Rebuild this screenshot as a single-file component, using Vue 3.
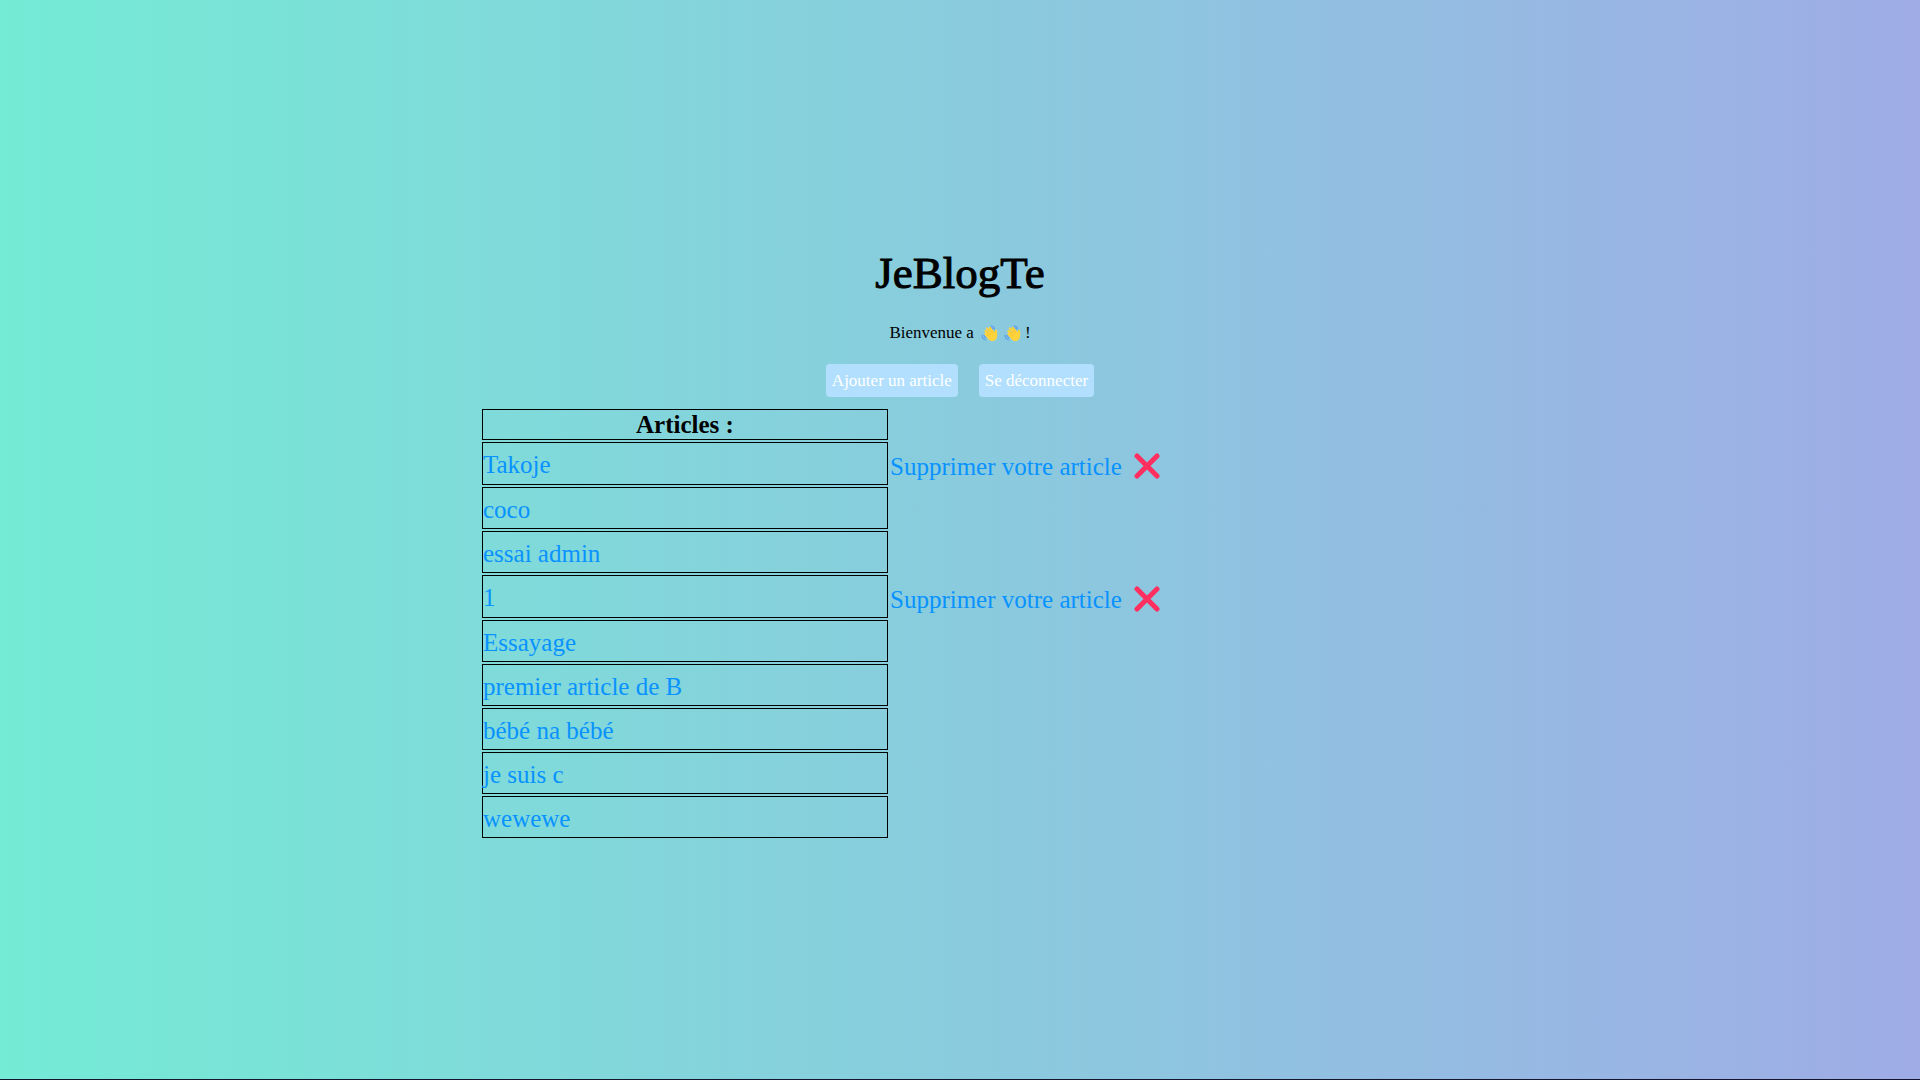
<script setup>
const articles = [
  { title: 'Takoje', own: true },
  { title: 'coco', own: false },
  { title: 'essai admin', own: false },
  { title: '1', own: true },
  { title: 'Essayage', own: false },
  { title: 'premier article de B', own: false },
  { title: 'bébé na bébé', own: false },
  { title: 'je suis c', own: false },
  { title: 'wewewe', own: false }
]
</script>

<template>
  <main class="page">
    <h1>JeBlogTe</h1>
    <p class="welcome">
      <span>Bienvenue a</span>
      <span class="waves">
        <svg v-for="n in 2" :key="n" class="wave" viewBox="0 0 34 34" aria-hidden="true">
          <g fill="none" stroke="#5c9dec" stroke-width="2.4" stroke-linecap="round">
            <path d="M20 2Q26 2 27 8M19 5Q22 5 24 9" />
            <path d="M2 20Q2 27 9 30M6 20Q6 24 10 26" />
          </g>
          <g fill="none" stroke="#ffd33b" stroke-width="4.6" stroke-linecap="round">
            <path d="M9 12L19 22M12 7L23 19M18 6L27 18M9 18L17 26M30 12L30 22" />
          </g>
          <path d="M13 16L20 12L27 14L32 16Q33 26 29 30Q22 35 15 29L11 23Z" fill="#ffd33b" />
          <path d="M13 12l7 8M17 9l7 8M11 16l6 7" fill="none" stroke="#eeb32f" stroke-width="1" />
        </svg>
      </span>
      <span>!</span>
    </p>
    <nav class="actions">
      <button type="button">Ajouter un article</button>
      <button type="button">Se déconnecter</button>
    </nav>
    <table>
      <colgroup>
        <col class="title-col" />
        <col />
      </colgroup>
      <thead>
        <tr>
          <th scope="col">Articles :</th>
        </tr>
      </thead>
      <tbody>
        <tr v-for="article in articles" :key="article.title" :class="{ own: article.own }">
          <td class="title"><a href="#">{{ article.title }}</a></td>
          <td v-if="article.own" class="remove">
            <a href="#">
              <span>Supprimer votre article</span>
              <svg class="cross" viewBox="0 0 26 26" aria-hidden="true">
                <path d="M3 3L23 23M23 3L3 23" />
              </svg>
            </a>
          </td>
        </tr>
      </tbody>
    </table>
  </main>
</template>

<style>
body {
  margin: 0;
}
</style>

<style scoped>
.page {
  box-sizing: border-box;
  min-height: 100vh;
  display: flex;
  flex-direction: column;
  align-items: center;
  justify-content: center;
  padding-top: 2px;
  border-bottom: 1px solid #15152e;
  background: linear-gradient(to right, #74ebd5, #9face6);
  color: #000;
  font-family: "Liberation Serif", "Times New Roman", serif;
  font-size: 17px;
}

h1 {
  margin: 0 0 18px;
  font-size: 45px;
  line-height: 64px;
  font-weight: 400;
  -webkit-text-stroke: 1px #000;
}

.welcome {
  display: flex;
  align-items: center;
  margin: 0 0 21px;
  line-height: 20px;
}

.waves {
  display: flex;
  gap: 6px;
  margin: 0 4px 0 7px;
}

.wave {
  width: 17px;
  height: 17px;
}

.actions {
  display: flex;
  gap: 21px;
  margin-bottom: 10px;
}

button {
  height: 33px;
  padding: 0 6px;
  border: 0;
  border-radius: 4px;
  background: #b2dffe;
  color: #fff;
  font: inherit;
  cursor: pointer;
}

table {
  width: 50%;
  table-layout: fixed;
  border-collapse: separate;
  border-spacing: 2px;
  font-size: 25px;
}

.title-col {
  width: 406px;
}

th,
td {
  box-sizing: border-box;
  padding: 0;
  line-height: 29px;
}

th,
.title {
  border: 1px solid #000;
}

th {
  height: 31px;
}

td {
  height: 42px;
  text-align: left;
}

.own td {
  height: 43px;
}

td a {
  color: #0892ff;
  text-decoration: none;
}

.title {
  padding-top: 2px;
}

.remove {
  padding-top: 5px;
}

.remove a {
  display: flex;
  align-items: center;
  gap: 12px;
}

.cross {
  width: 26px;
  height: 26px;
}

.cross path {
  fill: none;
  stroke: #ff2f5f;
  stroke-width: 5;
  stroke-linecap: round;
}
</style>
